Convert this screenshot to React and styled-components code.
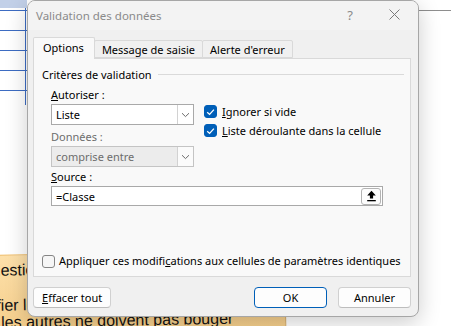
import React from "react";
import styled, { createGlobalStyle } from "styled-components";

const GlobalStyle = createGlobalStyle`
  html, body {
    margin: 0;
    padding: 0;
    background: #fff;
  }
  body {
    font-family: "Noto Sans", "Segoe UI", sans-serif;
    font-size: 11px;
    color: #000;
  }
`;

function Chevron() {
  return (
    <svg width="9" height="6" viewBox="0 0 9 6">
      <path d="M1 1.2 L4.5 4.6 L8 1.2" fill="none" stroke="#6b6b6b" strokeWidth="1" />
    </svg>
  );
}

function Check() {
  return (
    <svg width="9" height="8" viewBox="0 0 9 8">
      <path d="M1.2 4.2 L3.6 6.4 L7.9 1.6" fill="none" stroke="#fff" strokeWidth="1.3" />
    </svg>
  );
}

function UploadIcon() {
  return (
    <svg width="11" height="12" viewBox="0 0 11 12">
      <path d="M5.5 0.8 L1.2 5.4 H3.9 V8.6 H7.1 V5.4 H9.8 Z" fill="#000" />
      <rect x="1.2" y="10" width="8.6" height="1.3" fill="#000" />
    </svg>
  );
}

function CloseIcon() {
  return (
    <svg width="11" height="11" viewBox="0 0 11 11">
      <path d="M0.5 0.5 L10.5 10.5 M10.5 0.5 L0.5 10.5" stroke="#7a7a7a" strokeWidth="1" />
    </svg>
  );
}

function CheckBox({ checked }) {
  return <Box checked={checked}>{checked && <Check />}</Box>;
}

export default function App() {
  return (
    <>
      <GlobalStyle />
      <Desktop>
        <SheetGrid />
        <BackLine />
        <StickyNote>
          <NoteLine indent={-21} gap={6}>Questions posées</NoteLine>
          <NoteLine indent={-33} gap={18}>Vérifier les cellules</NoteLine>
          <NoteLine indent={0} gap={0}>les autres ne doivent pas bouger</NoteLine>
        </StickyNote>

        <Dialog>
          <TitleBar>
            <Title>Validation des données</Title>
            <Controls>
              <Control>?</Control>
              <Control>
                <CloseIcon />
              </Control>
            </Controls>
          </TitleBar>

          <Tabs>
            <Tab active>Options</Tab>
            <Tab>Message de saisie</Tab>
            <Tab>Alerte d'erreur</Tab>
          </Tabs>

          <Panel>
            <GroupHeader>
              <span>Critères de validation</span>
              <Rule />
            </GroupHeader>

            <Form>
              <Field>
                <Label>
                  <u>A</u>utoriser :
                </Label>
                <Select>
                  <SelectValue>Liste</SelectValue>
                  <SelectButton>
                    <Chevron />
                  </SelectButton>
                </Select>
              </Field>

              <Options>
                <OptionRow>
                  <CheckBox checked />
                  <span>
                    <u>I</u>gnorer si vide
                  </span>
                </OptionRow>
                <OptionRow>
                  <CheckBox checked />
                  <span>
                    <u>L</u>iste déroulante dans la cellule
                  </span>
                </OptionRow>
              </Options>

              <Field second>
                <Label disabled>Données :</Label>
                <Select disabled>
                  <SelectValue disabled>comprise entre</SelectValue>
                  <SelectButton disabled>
                    <Chevron />
                  </SelectButton>
                </Select>
              </Field>

              <Wide>
                <Label>
                  <u>S</u>ource :
                </Label>
                <Input>
                  <InputText>=Classe</InputText>
                  <PickButton>
                    <UploadIcon />
                  </PickButton>
                </Input>
              </Wide>
            </Form>

            <ApplyRow>
              <CheckBox />
              <span>
                Appliquer ces modifi<u>c</u>ations aux cellules de paramètres identiques
              </span>
            </ApplyRow>
          </Panel>

          <Footer>
            <Button>
              <u>E</u>ffacer tout
            </Button>
            <Spacer />
            <Button primary>OK</Button>
            <Button>Annuler</Button>
          </Footer>
        </Dialog>
      </Desktop>
    </>
  );
}

const Desktop = styled.div`
  position: relative;
  width: 451px;
  height: 326px;
  overflow: hidden;
  background: #fff;
`;

const SheetGrid = styled.div`
  position: absolute;
  left: 0;
  top: 0;
  width: 27px;
  height: 105px;
  background:
    linear-gradient(#c2d0e8, #c2d0e8) 0 0 / 100% 8px no-repeat,
    linear-gradient(90deg, transparent 25px, #3d6cc2 25px, #3d6cc2 26px, transparent 26px),
    repeating-linear-gradient(
      180deg,
      transparent 0,
      transparent 10px,
      #3d6cc2 10px,
      #3d6cc2 11px,
      transparent 11px,
      transparent 20px
    );
`;

const BackLine = styled.div`
  position: absolute;
  left: 419px;
  top: 10px;
  width: 32px;
  height: 1px;
  background: #8e8e8e;
`;

const StickyNote = styled.div`
  position: absolute;
  left: -14px;
  top: 255px;
  width: 299px;
  height: 90px;
  box-sizing: border-box;
  padding-left: 14px;
  background: linear-gradient(180deg, #fde0aa, #f4cb85);
  border-top: 1px solid #eeb75a;
  border-right: 1px solid #d5a85d;
  transform: rotate(-1deg);
  transform-origin: 0 0;
  font-family: "Liberation Sans", Arial, sans-serif;
  font-size: 16px;
  color: #111;
`;

const NoteLine = styled.div`
  line-height: 17px;
  white-space: nowrap;
  margin-left: ${(p) => p.indent}px;
  margin-top: ${(p) => p.gap}px;
`;

const Dialog = styled.div`
  position: absolute;
  left: 27px;
  top: 0;
  width: 392px;
  height: 317px;
  box-sizing: border-box;
  display: flex;
  flex-direction: column;
  background: #f0f0f0;
  border: 1px solid #a6a6a6;
  border-radius: 8px;
  box-shadow: 0 6px 22px rgba(0, 0, 0, 0.2);
  overflow: hidden;
`;

const TitleBar = styled.div`
  display: flex;
  align-items: center;
  height: 29px;
  padding-left: 8px;
  background: #f3f3f3;
`;

const Title = styled.div`
  color: #8a8a8a;
  font-size: 11.5px;
  padding-bottom: 1px;
`;

const Controls = styled.div`
  display: flex;
  margin-left: auto;
  margin-right: 2px;
`;

const Control = styled.div`
  width: 44px;
  height: 29px;
  display: flex;
  align-items: center;
  justify-content: center;
  color: #8a8a8a;
  font-size: 13px;
  padding-bottom: 2px;
  box-sizing: border-box;
`;

const Tabs = styled.div`
  display: flex;
  align-items: flex-end;
  height: 21px;
  margin: 7px 0 0 5px;
  position: relative;
  z-index: 1;
`;

const Tab = styled.div`
  display: flex;
  align-items: center;
  box-sizing: border-box;
  height: ${(p) => (p.active ? "22px" : "18px")};
  margin-bottom: ${(p) => (p.active ? "-1px" : "0")};
  margin-left: -1px;
  padding: 0 7px;
  padding-bottom: ${(p) => (p.active ? "2px" : "0")};
  background: ${(p) => (p.active ? "#f9f9f9" : "#f0f0f0")};
  border: 1px solid #d9d9d9;
  border-bottom: ${(p) => (p.active ? "none" : "1px solid #d9d9d9")};
  border-radius: 2px 2px 0 0;
  white-space: nowrap;
  &:first-child {
    margin-left: 0;
    padding: 0 10px 2px 9px;
  }
`;

const Panel = styled.div`
  display: flex;
  flex-direction: column;
  box-sizing: border-box;
  width: 378px;
  height: 219px;
  margin-left: 5px;
  padding: 8px 6px 7px 8px;
  background: #f9f9f9;
  border: 1px solid #d9d9d9;
`;

const GroupHeader = styled.div`
  display: flex;
  align-items: center;
  gap: 6px;
  line-height: 16px;
`;

const Rule = styled.div`
  flex: 1;
  height: 1px;
  margin-top: -1px;
  background: #dadada;
`;

const Form = styled.div`
  display: grid;
  grid-template-columns: 143px 1fr;
  align-items: start;
  column-gap: 10px;
  margin: 4px 0 0 9px;
`;

const Field = styled.div`
  display: flex;
  flex-direction: column;
  grid-column: 1;
  margin-top: ${(p) => (p.second ? "4px" : "0")};
`;

const Wide = styled(Field)`
  grid-column: 1 / 3;
  margin-top: 2px;
`;

const Label = styled.div`
  line-height: 16px;
  margin-bottom: 1px;
  color: ${(p) => (p.disabled ? "#6d6d6d" : "#000")};
`;

const Select = styled.div`
  display: flex;
  box-sizing: border-box;
  height: 21px;
  border: 1px solid ${(p) => (p.disabled ? "#c4c4c4" : "#a9a9a9")};
  background: ${(p) => (p.disabled ? "#ececec" : "#fff")};
`;

const SelectValue = styled.div`
  flex: 1;
  display: flex;
  align-items: center;
  padding-left: 4px;
  color: ${(p) => (p.disabled ? "#6d6d6d" : "#000")};
`;

const SelectButton = styled.div`
  width: 15px;
  display: flex;
  align-items: center;
  justify-content: center;
  background: ${(p) => (p.disabled ? "#fbfbfb" : "#fff")};
  border-left: 1px solid #d2d2d2;
`;

const Options = styled.div`
  grid-column: 2;
  grid-row: 1 / 3;
  display: flex;
  flex-direction: column;
  padding-top: 15px;
`;

const OptionRow = styled.div`
  display: flex;
  align-items: center;
  gap: 5px;
  height: 19px;
`;

const Box = styled.div`
  width: 13px;
  height: 13px;
  box-sizing: border-box;
  flex: none;
  display: flex;
  align-items: center;
  justify-content: center;
  border-radius: 3px;
  background: ${(p) => (p.checked ? "#005fb8" : "#f6f6f6")};
  border: 1px solid ${(p) => (p.checked ? "#005fb8" : "#858585")};
`;

const Input = styled.div`
  display: flex;
  align-items: center;
  box-sizing: border-box;
  width: 332px;
  height: 20px;
  border: 1px solid #a9a9a9;
  background: #fff;
  padding-right: 1px;
`;

const InputText = styled.div`
  flex: 1;
  padding-left: 4px;
`;

const PickButton = styled.div`
  width: 20px;
  height: 17px;
  box-sizing: border-box;
  display: flex;
  align-items: center;
  justify-content: center;
  border: 1px solid #b3b3b3;
  border-radius: 3px;
  background: #fdfdfd;
`;

const ApplyRow = styled.div`
  display: flex;
  align-items: center;
  gap: 4px;
  margin-top: auto;
  line-height: 16px;
  white-space: nowrap;
`;

const Footer = styled.div`
  display: flex;
  gap: 11px;
  margin-top: 10px;
  padding: 0 7px 0 5px;
`;

const Spacer = styled.div`
  flex: 1;
`;

const Button = styled.div`
  box-sizing: border-box;
  display: flex;
  align-items: center;
  justify-content: center;
  width: ${(p) => (p.primary ? "73px" : "auto")};
  min-width: 73px;
  height: 21px;
  padding: 0 8px;
  background: #fdfdfd;
  border: 1px solid ${(p) => (p.primary ? "#005fb8" : "#d0d0d0")};
  border-bottom-color: ${(p) => (p.primary ? "#005fb8" : "#bdbdbd")};
  border-radius: 4px;
  white-space: nowrap;
`;
